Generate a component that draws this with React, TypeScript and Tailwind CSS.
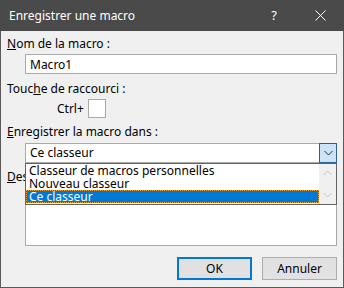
import { useState } from "react";

const font = "font-['Noto_Sans',sans-serif]";

function Chevron({ up, color }: { up?: boolean; color: string }) {
  return (
    <svg width="9" height="6" viewBox="0 0 9 6" className="block">
      <path d={up ? "M0.5 5 L4.5 1 L8.5 5" : "M0.5 1 L4.5 5 L8.5 1"} fill="none" stroke={color} strokeWidth="1" />
    </svg>
  );
}

export default function App() {
  const [name, setName] = useState("Macro1");
  const items = ["Classeur de macros personnelles", "Nouveau classeur", "Ce classeur"];
  const selected = 2;

  return (
    <div className={`w-[344px] h-[288px] flex flex-col bg-[#f0f0f0] border-x border-b border-[#5a5a5a] text-[12px] text-black ${font}`}>
      {/* Title bar */}
      <div className="h-[31px] shrink-0 -mx-px flex items-center bg-[#4a4a4a] text-white select-none">
        <span className="pl-[9px] flex-1 text-[12px]">Enregistrer une macro</span>
        <span className="w-[14px] text-center mr-[34px] text-[13px]">?</span>
        <svg width="11" height="11" viewBox="0 0 11 11" className="mr-[18px]">
          <path d="M0.5 0.5 L10.5 10.5 M10.5 0.5 L0.5 10.5" stroke="#fff" strokeWidth="1" />
        </svg>
      </div>

      {/* Body */}
      <div className="relative flex-1 flex flex-col pl-[6px] leading-[16px]">
        <div className="mt-[5px]">
          <span className="underline">N</span>om de la macro :
        </div>
        <input
          value={name}
          onChange={(e) => setName(e.target.value)}
          className="mt-[2px] ml-[18px] w-[312px] h-[20px] bg-white border border-[#a9a9a9] px-[4px] outline-none text-[12px]"
        />

        <div className="mt-[7px]">
          Touc<span className="underline">h</span>e de raccourci :
        </div>
        <div className="mt-[2px] flex items-center h-[19px] ml-[50px]">
          <span className="mr-[4px]">Ctrl+</span>
          <div className="w-[18px] h-[19px] bg-white border border-[#a9a9a9]" />
        </div>

        <div className="mt-[6px]">
          <span className="underline">E</span>nregistrer la macro dans :
        </div>
        <div className="mt-[3px] ml-[18px] w-[312px] h-[20px] flex bg-white border border-[#a9a9a9]">
          <span className="flex-1 pl-[4px] leading-[18px]">Ce classeur</span>
          <div className="-my-px -mr-px w-[18px] h-[20px] flex items-center justify-center bg-[#cce4f7] border border-[#2c628b]">
            <Chevron color="#333" />
          </div>
        </div>

        <div className="mt-[6px]">
          <span className="underline">D</span>escription :
        </div>
        <div className="mt-[2px] ml-[18px] w-[312px] h-[59px] bg-white border border-[#a9a9a9]" />

        <div className="mt-[11px] flex justify-end gap-[10px] pr-[6px]">
          <button className="w-[75px] h-[23px] bg-[#e1e1e1] border-2 border-[#0078d7]">OK</button>
          <button className="w-[75px] h-[23px] bg-[#e1e1e1] border border-[#adadad]">Annuler</button>
        </div>

        {/* Open dropdown list (popup over the description field) */}
        <div className="absolute left-[24px] top-[132px] w-[312px] h-[42px] flex bg-white border border-[#646464] leading-[13px]">
          <div className="flex-1 flex flex-col">
            {items.map((it, i) => (
              <div
                key={it}
                className={
                  i === selected
                    ? "h-[13px] pl-[3px] bg-[#0078d7] text-white outline-1 outline-dotted outline-[#f0a030] -outline-offset-1"
                    : "h-[13px] pl-[3px]"
                }
              >
                {it}
              </div>
            ))}
          </div>
          <div className="w-[17px] flex flex-col items-center justify-between bg-[#f0f0f0] py-[6px]">
            <Chevron up color="#c5c5c5" />
            <Chevron color="#c5c5c5" />
          </div>
        </div>
      </div>
    </div>
  );
}
